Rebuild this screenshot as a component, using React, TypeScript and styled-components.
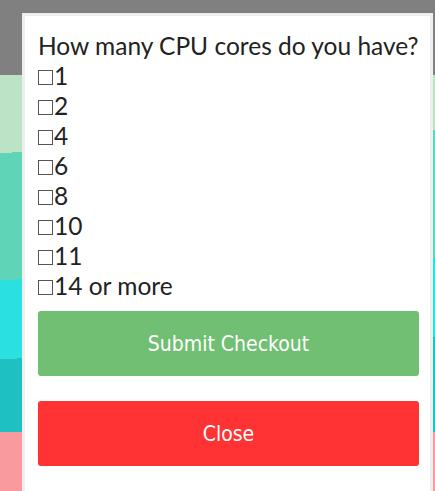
import React from "react";
import styled, { createGlobalStyle } from "styled-components";

const Global = createGlobalStyle`
  *, *::before, *::after { box-sizing: border-box; }
  html, body { margin: 0; padding: 0; }
  body { width: 435px; height: 491px; overflow: hidden; font-family: Lato, "Liberation Sans", sans-serif; }
`;

const Page = styled.div`
  position: relative;
  width: 435px;
  height: 491px;
  display: flex;
  flex-direction: column;
  overflow: hidden;
  background: #ffffff;
`;

const Header = styled.div`
  height: 75px;
  background: #808080;
  flex-shrink: 0;
`;

const Hero = styled.div`
  height: 357px;
  flex-shrink: 0;
  background: linear-gradient(
    177deg,
    #bde3c6 0 78px,
    #5fd4b6 78px 205px,
    #2ae0e0 205px 284px,
    #1fc0c2 284px
  );
`;

const Footer = styled.div`
  flex: 1;
  background: #f99a9f;
`;

const Modal = styled.div`
  position: absolute;
  left: 22px;
  top: 13px;
  width: 411px;
  height: 478px;
  background: #ffffff;
  border: 3px solid #eeeeee;
  border-bottom: none;
  padding: 15px 11px 0 13px;
  display: flex;
  flex-direction: column;
`;

const Question = styled.div`
  font-family: Lato, "Liberation Sans", sans-serif;
  font-size: 24.5px;
  line-height: 30px;
  height: 30px;
  color: #222222;
  white-space: nowrap;
`;

const Option = styled.label`
  display: flex;
  align-items: center;
  height: 30px;
  font-family: Lato, "Liberation Sans", sans-serif;
  font-size: 24.5px;
  line-height: 30px;
  color: #222222;
`;

const Box = styled.span`
  display: inline-block;
  width: 15px;
  height: 15px;
  margin-right: 1px;
  margin-top: 2px;
  border: 1.5px solid #555555;
  background: #ffffff;
  flex-shrink: 0;
`;

const Buttons = styled.div`
  display: flex;
  flex-direction: column;
  gap: 25px;
  margin-top: 10px;
`;

const Button = styled.button<{ $bg: string }>`
  height: 65px;
  width: 100%;
  border: none;
  border-radius: 3px;
  background: ${(p) => p.$bg};
  color: #ffffff;
  font-family: "DejaVu Sans Condensed", "DejaVu Sans", sans-serif;
  font-stretch: condensed;
  font-size: 21px;
  cursor: pointer;
`;

const options = ["1", "2", "4", "6", "8", "10", "11", "14 or more"];

export default function App() {
  return (
    <>
      <Global />
      <Page>
        <Header />
        <Hero />
        <Footer />
        <Modal>
          <Question>How many CPU cores do you have?</Question>
          {options.map((o) => (
            <Option key={o}>
              <Box aria-hidden="true" />
              {o}
            </Option>
          ))}
          <Buttons>
            <Button $bg="#71bf73">Submit Checkout</Button>
            <Button $bg="#ff3333">Close</Button>
          </Buttons>
        </Modal>
      </Page>
    </>
  );
}
